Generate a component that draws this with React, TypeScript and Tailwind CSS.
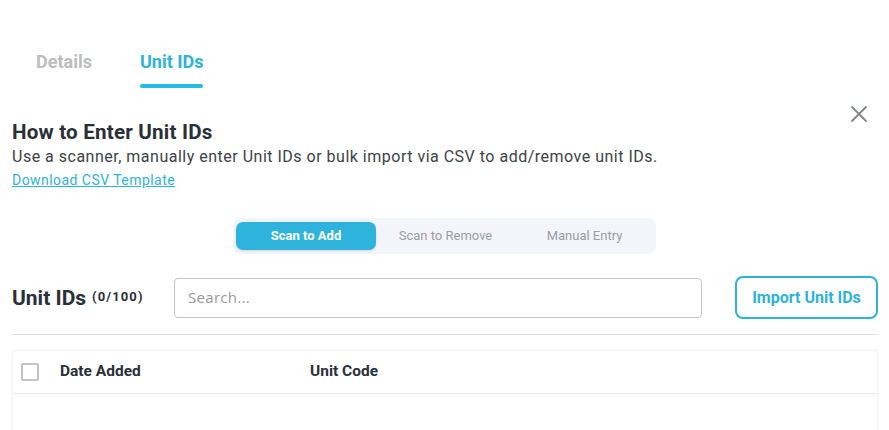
import React from "react";

export default function App() {
  return (
    <div className="w-[889px] h-[430px] bg-white overflow-hidden relative" style={{ fontFamily: "Roboto, sans-serif" }}>
      {/* Tabs */}
      <div className="flex pt-[50px] pl-[36px] gap-[48px]">
        <div className="text-[18px] font-bold text-[#bdbdbd] leading-[24px] pb-[10px]">Details</div>
        <div className="flex flex-col">
          <div className="text-[18px] font-bold text-[#2eb3dd] leading-[24px]">Unit IDs</div>
          <div className="h-[4px] mt-[10px] rounded-full bg-[#22bde3]" />
        </div>
      </div>

      <button className="absolute left-[849px] top-[104px] text-[#80868b]">
        <svg width="20" height="20" viewBox="0 0 20 20" fill="none" stroke="currentColor" strokeWidth="1.8" strokeLinecap="round">
          <path d="M3 3L17 17M17 3L3 17" />
        </svg>
      </button>

      {/* Intro */}
      <div className="pl-[12px] mt-[31px]">
        <div className="text-[20.6px] font-bold text-[#2a3038] leading-[26px] tracking-[0.2px]">How to Enter Unit IDs</div>
        <div className="text-[16px] text-[#3d4246] leading-[22px] tracking-[0.5px] mt-[1px]">
          Use a scanner, manually enter Unit IDs or bulk import via CSV to add/remove unit IDs.
        </div>
        <a href="#" className="inline-block text-[14px] text-[#2eb3dd] underline leading-[20px] mt-[2px] tracking-[0.45px]">
          Download CSV Template
        </a>
      </div>

      {/* Segmented control */}
      <div className="flex justify-center mt-[26px]">
        <div className="flex p-[3px] pr-0 bg-[#f4f5fa] rounded-[8px] w-[423px] h-[36px]">
          <div className="w-[140px] h-[28px] mt-[1px] rounded-[7px] bg-[#2eb3dd] text-white text-[13px] font-bold flex items-center justify-center shadow-[0_1px_3px_rgba(0,0,0,0.12)]">
            Scan to Add
          </div>
          <div className="w-[139px] h-[28px] mt-[1px] text-[#9a9ea3] text-[13px] flex items-center justify-center">Scan to Remove</div>
          <div className="w-[139px] h-[28px] mt-[1px] text-[#9a9ea3] text-[13px] flex items-center justify-center">Manual Entry</div>
        </div>
      </div>

      {/* Unit IDs row */}
      <div className="flex items-center pl-[12px] pr-[11px] mt-[22px] h-[43px]">
        <div className="w-[162px] flex items-center">
          <span className="text-[21px] font-bold text-[#2a3038] leading-[26px]">Unit IDs</span>
          <span className="text-[13px] font-bold text-[#2a3038] ml-[6px] tracking-[1.1px] leading-[16px] mb-[2px]">(0/100)</span>
        </div>
        <div className="w-[528px] h-[40px] border border-[#c4c4c4] rounded-[4px] flex items-center px-[13px]">
          <span className="text-[15px] text-[#9a9a9a] tracking-[0.3px]" style={{ fontFamily: '"Open Sans", sans-serif' }}>Search...</span>
        </div>
        <div className="flex-1" />
        <button className="w-[143px] h-[43px] border-2 border-[#2eb3dd] rounded-[8px] text-[#2eb3dd] text-[16px] font-bold">
          Import Unit IDs
        </button>
      </div>

      <div className="mx-[12px] mr-[11px] mt-[15px] h-px bg-[#e2e2e2]" />

      {/* Table */}
      <div className="ml-[12px] mr-[11px] mt-[15px] rounded-t-[4px] shadow-[0_0_2px_rgba(0,0,0,0.08)] border border-[#f4f4f4] border-b-0 h-[200px]">
        <div className="h-[43px] flex items-center border-b border-[#ebebeb]">
          <div className="w-[18px] h-[18px] border-2 border-[#c4c4c4] rounded-[2px] ml-[8px]" />
          <div className="text-[15.5px] font-bold text-[#2a3038] ml-[21px] w-[250px]">Date Added</div>
          <div className="text-[15.5px] font-bold text-[#2a3038]">Unit Code</div>
        </div>
      </div>
    </div>
  );
}
